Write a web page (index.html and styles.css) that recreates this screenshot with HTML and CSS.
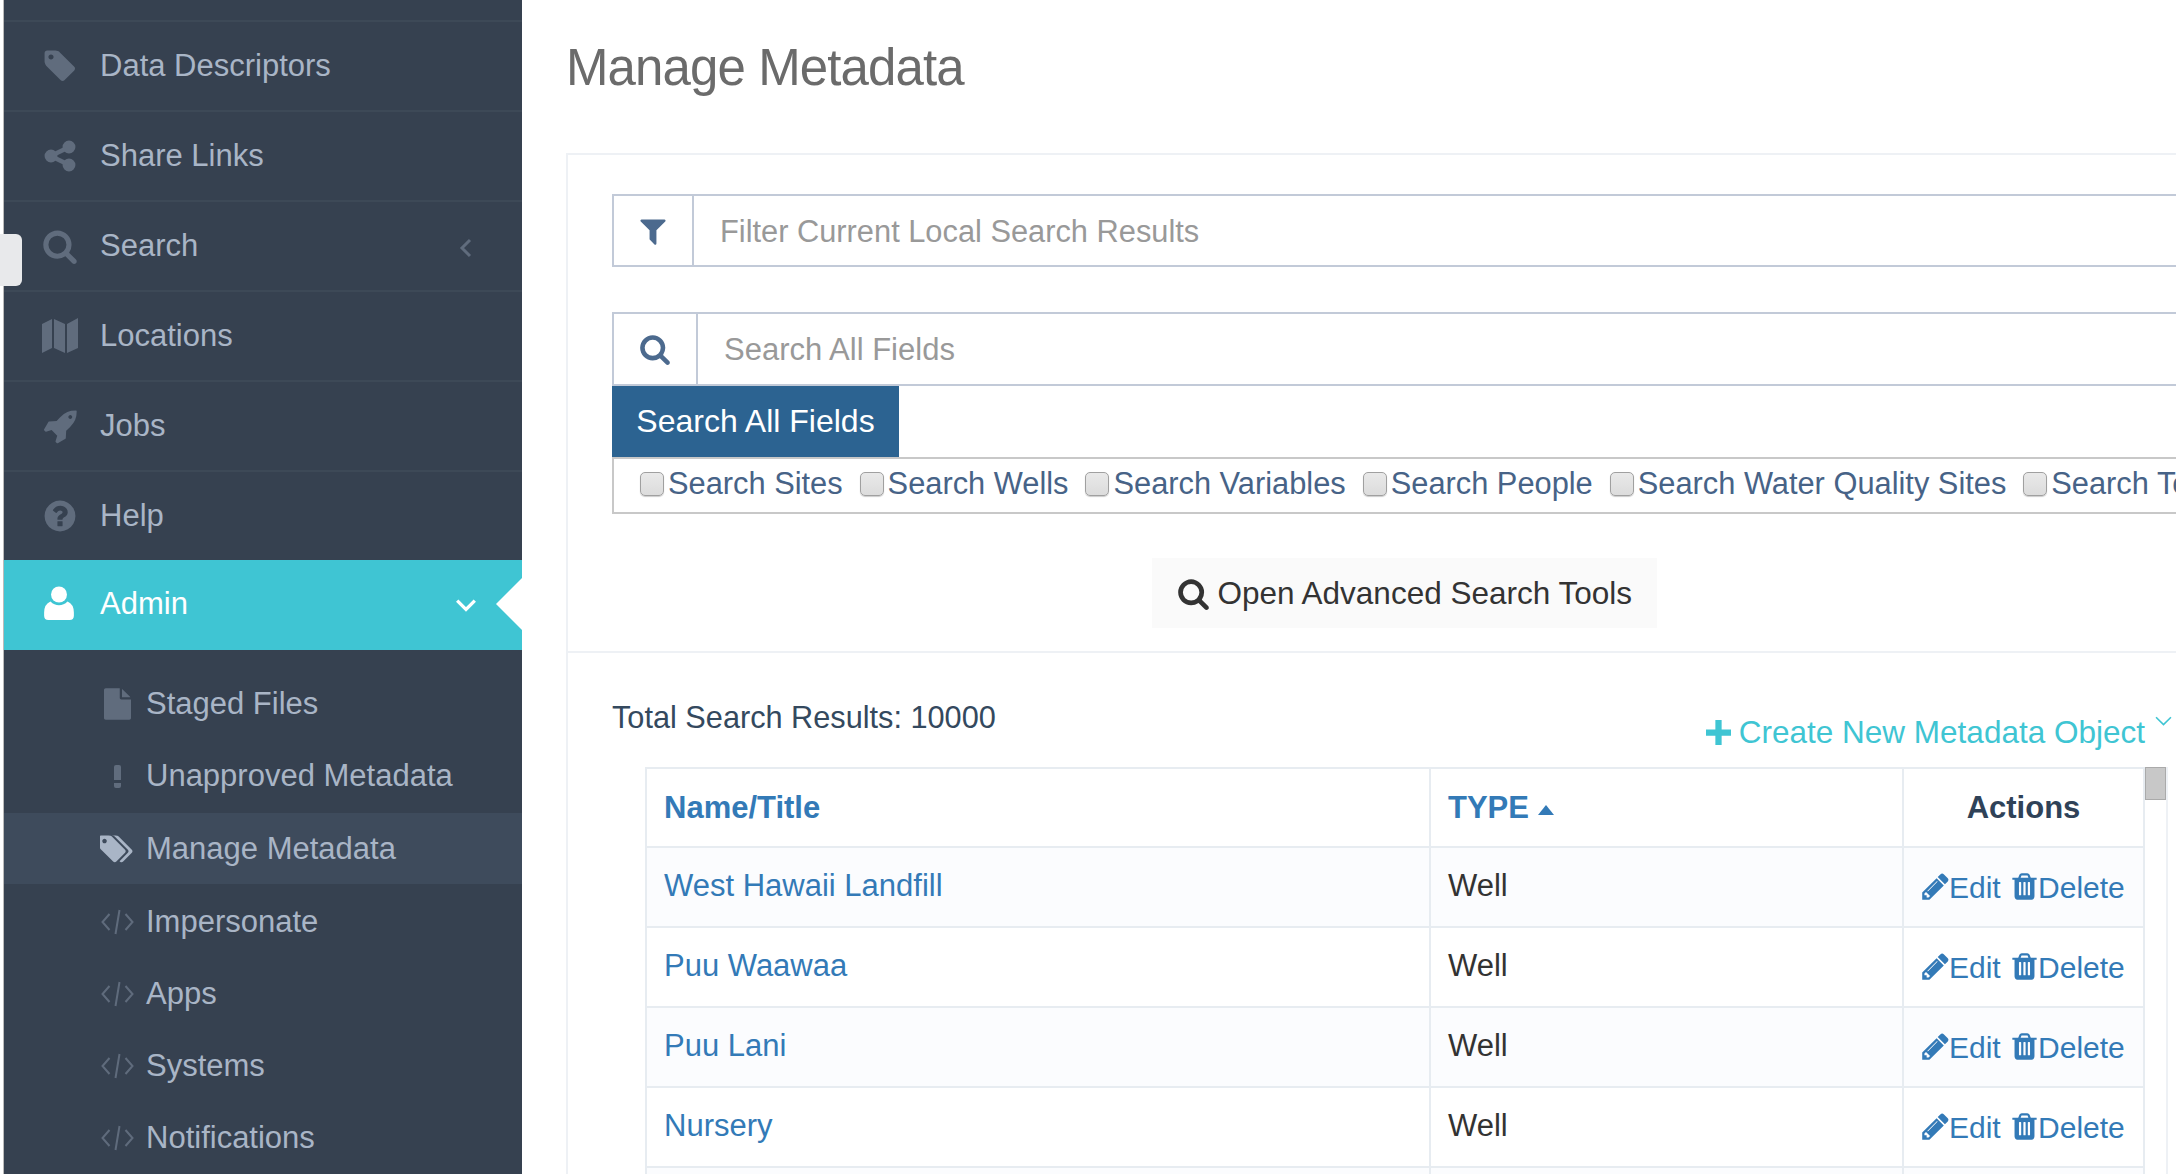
FILE: index.html
```html
<!DOCTYPE html>
<html lang="en">
<head>
    <meta charset="UTF-8">
    <title>Manage Metadata</title>
    <link rel="stylesheet" href="styles.css">
</head>
<body>
    <svg class="icon-defs" xmlns="http://www.w3.org/2000/svg">
        <symbol id="i-tag" viewBox="0 0 1792 1792"><path d="M576 448q0-53-37.5-90.5t-90.5-37.5-90.5 37.5-37.5 90.5 37.5 90.5 90.5 37.5 90.5-37.5 37.5-90.5zm1067 576q0 53-37 90l-491 492q-39 37-91 37-53 0-90-37l-715-716q-38-37-64.5-101t-26.5-117v-416q0-52 38-90t90-38h416q53 0 117 26.5t102 64.5l715 714q37 39 37 91z"/></symbol>
        <symbol id="i-tags" viewBox="0 0 1920 1792"><path d="M384 448q0-53-37.5-90.5t-90.5-37.5-90.5 37.5-37.5 90.5 37.5 90.5 90.5 37.5 90.5-37.5 37.5-90.5zm1067 576q0 53-37 90l-491 492q-39 37-91 37-53 0-90-37l-715-716q-38-37-64.5-101t-26.5-117v-416q0-52 38-90t90-38h416q53 0 117 26.5t102 64.5l715 714q37 39 37 91zm384 0q0 53-37 90l-491 492q-39 37-91 37-36 0-59-14t-53-45l470-470q37-37 37-90 0-52-37-91l-715-714q-38-38-102-64.5t-117-26.5h224q53 0 117 26.5t102 64.5l715 714q37 39 37 91z"/></symbol>
        <symbol id="i-share" viewBox="0 0 1792 1792"><path d="M1344 1024q133 0 226.5 93.5t93.5 226.5-93.5 226.5-226.5 93.5-226.5-93.5-93.5-226.5q0-12 2-34l-360-180q-92 86-218 86-133 0-226.5-93.5t-93.5-226.5 93.5-226.5 226.5-93.5q126 0 218 86l360-180q-2-22-2-34 0-133 93.5-226.5t226.5-93.5 226.5 93.5 93.5 226.5-93.5 226.5-226.5 93.5q-126 0-218-86l-360 180q2 22 2 34t-2 34l360 180q92-86 218-86z"/></symbol>
        <symbol id="i-search" viewBox="0 0 1792 1792"><path d="M1216 832q0-185-131.5-316.5t-316.5-131.5-316.5 131.5-131.5 316.5 131.5 316.5 316.5 131.5 316.5-131.5 131.5-316.5zm512 832q0 52-38 90t-90 38q-54 0-90-38l-343-342q-179 124-399 124-143 0-273.5-55.5t-225-150-150-225-55.5-273.5 55.5-273.5 150-225 225-150 273.5-55.5 273.5 55.5 225 150 150 225 55.5 273.5q0 220-124 399l343 343q37 37 37 90z"/></symbol>
        <symbol id="i-map" viewBox="0 0 36 36"><path d="M0 6l10-5v29L0 35zM12 1l11 5v29l-11-5zM25 6l11-6v30l-11 5z"/></symbol>
        <symbol id="i-rocket" viewBox="0 0 1792 1792"><path d="M1504 448q0-40-28-68t-68-28-68 28-28 68 28 68 68 28 68-28 28-68zm224-288q0 249-75.5 430.5t-253.5 360.5q-81 80-195 176l-20 379q-2 16-16 26l-384 224q-7 4-16 4-12 0-23-9l-64-64q-13-14-8-32l85-276-281-281-276 85q-3 1-9 1-14 0-23-9l-64-64q-17-19-5-39l224-384q10-14 26-16l379-20q96-114 176-195 188-187 358-258t431-71q14 0 24 9.5t10 22.5z"/></symbol>
        <symbol id="i-help" viewBox="0 0 1792 1792"><path d="M1024 1376v-192q0-14-9-23t-23-9h-192q-14 0-23 9t-9 23v192q0 14 9 23t23 9h192q14 0 23-9t9-23zm256-672q0-88-55.5-163t-138.5-116-170-41q-243 0-371 213-15 24 8 42l132 100q7 6 19 6 16 0 25-12 53-68 86-92 34-24 86-24 48 0 85.5 26t37.5 59q0 38-20 61t-68 45q-63 28-115.5 86.5t-52.5 125.5v36q0 14 9 23t23 9h192q14 0 23-9t9-23q0-19 21.5-49.5t54.5-49.5q32-18 49-28.5t46-35 44.5-48 28-60.5 12.5-81zm384 192q0 209-103 385.5t-279.5 279.5-385.5 103-385.5-103-279.5-279.5-103-385.5 103-385.5 279.5-279.5 385.5-103 385.5 103 279.5 279.5 103 385.5z"/></symbol>
        <symbol id="i-user" viewBox="0 0 28 32"><circle cx="14" cy="8" r="7.5"/><path d="M6 14.500q3.500 3.500 8 3.500t8-3.500q6 2.500 6 10.500v3q0 4-4 4H4q-4 0-4-4v-3q0-8 6-10.500z"/></symbol>
        <symbol id="i-file" viewBox="0 0 1536 1792"><path d="M1024 512v-472q22 14 36 28l408 408q14 14 28 36h-472zm-128 32q0 40 28 68t68 28h544v1056q0 40-28 68t-68 28h-1344q-40 0-68-28t-28-68v-1600q0-40 28-68t68-28h800v544z"/></symbol>
        <symbol id="i-pencil" viewBox="0 0 1792 1792"><path d="M491 1536l91-91-235-235-91 91v107h128v128h107zm523-928q0-22-22-22-10 0-17 7l-542 542q-7 7-7 17 0 22 22 22 10 0 17-7l542-542q7-7 7-17zm-54-192l416 416-832 832h-416v-416zm683 96q0 53-37 90l-166 166-416-416 166-165q36-38 90-38 53 0 91 38l235 234q37 39 37 91z"/></symbol>
        <symbol id="i-trash" viewBox="0 0 1792 1792"><path d="M704 1376v-704q0-14-9-23t-23-9h-64q-14 0-23 9t-9 23v704q0 14 9 23t23 9h64q14 0 23-9t9-23zm256 0v-704q0-14-9-23t-23-9h-64q-14 0-23 9t-9 23v704q0 14 9 23t23 9h64q14 0 23-9t9-23zm256 0v-704q0-14-9-23t-23-9h-64q-14 0-23 9t-9 23v704q0 14 9 23t23 9h64q14 0 23-9t9-23zm-544-992h448l-48-117q-7-9-17-11h-317q-10 2-17 11zm928 32v64q0 14-9 23t-23 9h-96v948q0 83-47 143.5t-113 60.5h-832q-66 0-113-58.5t-47-141.5v-952h-96q-14 0-23-9t-9-23v-64q0-14 9-23t23-9h309l70-167q15-37 54-63t79-26h320q40 0 79 26t54 63l70 167h309q14 0 23 9t9 23z"/></symbol>
        <symbol id="i-filter" viewBox="0 0 1792 1792"><path d="M1595 295q17 41-14 70l-493 493v742q0 42-39 59-13 5-25 5-27 0-45-19l-256-256q-19-19-19-45v-486l-493-493q-31-29-14-70 17-39 59-39h1280q42 0 59 39z"/></symbol>
        <symbol id="i-code" viewBox="0 0 32 26"><path d="M8 5L1 13l7 8M24 5l7 8-7 8M18 1l-4 24" fill="none" stroke="currentColor" stroke-width="2"/></symbol>
    </svg>

    <div class="edge-tab"></div>

    <div class="sidebar">
        <a class="nav-item"><svg class="nav-icon"><use href="#i-tag"/></svg>Data Descriptors</a>
        <a class="nav-item"><svg class="nav-icon"><use href="#i-share"/></svg>Share Links</a>
        <a class="nav-item"><svg class="nav-icon"><use href="#i-search"/></svg>Search
            <svg class="nav-arrow" viewBox="0 0 12 20"><path d="M10 2L2 10l8 8"/></svg>
        </a>
        <a class="nav-item"><svg class="nav-icon"><use href="#i-map"/></svg>Locations</a>
        <a class="nav-item"><svg class="nav-icon"><use href="#i-rocket"/></svg>Jobs</a>
        <a class="nav-item"><svg class="nav-icon"><use href="#i-help"/></svg>Help</a>
        <a class="nav-item active"><svg class="nav-icon"><use href="#i-user"/></svg>Admin
            <svg class="nav-arrow" viewBox="0 0 20 12"><path d="M2 2l8 8 8-8"/></svg>
        </a>
        <div class="sub-menu">
            <a class="sub-item"><span class="sub-icon"><svg class="file-icon"><use href="#i-file"/></svg></span>Staged Files</a>
            <a class="sub-item"><span class="sub-icon"><span class="bang"></span></span>Unapproved Metadata</a>
            <a class="sub-item current"><span class="sub-icon"><svg class="tags-icon"><use href="#i-tags"/></svg></span>Manage Metadata</a>
            <a class="sub-item"><span class="sub-icon"><svg class="code-icon"><use href="#i-code"/></svg></span>Impersonate</a>
            <a class="sub-item"><span class="sub-icon"><svg class="code-icon"><use href="#i-code"/></svg></span>Apps</a>
            <a class="sub-item"><span class="sub-icon"><svg class="code-icon"><use href="#i-code"/></svg></span>Systems</a>
            <a class="sub-item"><span class="sub-icon"><svg class="code-icon"><use href="#i-code"/></svg></span>Notifications</a>
        </div>
    </div>

    <div class="content">
        <h1 class="page-title">Manage Metadata</h1>
        <div class="portlet">
            <div class="search-section">
                <div class="input-group first">
                    <span class="addon addon-filter"><svg><use href="#i-filter"/></svg></span>
                    <input type="text" placeholder="Filter Current Local Search Results">
                </div>
                <div class="input-group second">
                    <span class="addon addon-search"><svg><use href="#i-search"/></svg></span>
                    <input type="text" placeholder="Search All Fields">
                </div>
                <button type="button" class="search-btn">Search All Fields</button>
                <div class="check-row">
                    <label><input type="checkbox">Search Sites</label>
                    <label><input type="checkbox">Search Wells</label>
                    <label><input type="checkbox">Search Variables</label>
                    <label><input type="checkbox">Search People</label>
                    <label><input type="checkbox">Search Water Quality Sites</label>
                    <label><input type="checkbox">Search Tools</label>
                </div>
                <div class="advanced">
                    <button type="button" class="advanced-btn"><svg><use href="#i-search"/></svg>Open Advanced Search Tools</button>
                </div>
            </div>
            <div class="results-section">
                <div class="results-head">
                    <div class="total">Total Search Results: 10000</div>
                    <a class="create-link">
                        <svg class="plus" viewBox="0 0 24 24"><path d="M9 0h6v9h9v6h-9v9H9v-9H0V9h9z"/></svg>
                        Create New Metadata Object
                        <svg class="create-arrow" viewBox="0 0 16 10"><path d="M1 1l7 7 7-7"/></svg>
                    </a>
                </div>
                <div class="table-wrap">
                    <table class="meta-table">
                        <colgroup><col class="col-name"><col class="col-type"><col class="col-actions"></colgroup>
                        <thead>
                            <tr>
                                <th>Name/Title</th>
                                <th>TYPE <svg class="sort-up" viewBox="0 0 16 10"><path d="M8 0l8 10H0z"/></svg></th>
                                <th class="actions-head">Actions</th>
                            </tr>
                        </thead>
                        <tbody>
                            <tr>
                                <td><a>West Hawaii Landfill</a></td>
                                <td>Well</td>
                                <td class="actions"><a><svg><use href="#i-pencil"/></svg>Edit</a> <a><svg><use href="#i-trash"/></svg>Delete</a></td>
                            </tr>
                            <tr>
                                <td><a>Puu Waawaa</a></td>
                                <td>Well</td>
                                <td class="actions"><a><svg><use href="#i-pencil"/></svg>Edit</a> <a><svg><use href="#i-trash"/></svg>Delete</a></td>
                            </tr>
                            <tr>
                                <td><a>Puu Lani</a></td>
                                <td>Well</td>
                                <td class="actions"><a><svg><use href="#i-pencil"/></svg>Edit</a> <a><svg><use href="#i-trash"/></svg>Delete</a></td>
                            </tr>
                            <tr>
                                <td><a>Nursery</a></td>
                                <td>Well</td>
                                <td class="actions"><a><svg><use href="#i-pencil"/></svg>Edit</a> <a><svg><use href="#i-trash"/></svg>Delete</a></td>
                            </tr>
                            <tr class="cut-row"><td></td><td></td><td></td></tr>
                        </tbody>
                    </table>
                    <div class="scroll-track"><div class="scroll-thumb"></div></div>
                </div>
            </div>
        </div>
    </div>
</body>
</html>
```

FILE: styles.css
```css
* {
    box-sizing: border-box;
}

html, body {
    height: 100%;
    margin: 0;
    overflow: hidden;
}

body {
    display: flex;
    background: #fff;
    font-family: "Liberation Sans", Arial, sans-serif;
    font-size: 31px;
    color: #34495e;
}

.icon-defs {
    display: none;
}

.edge-tab {
    position: absolute;
    left: 0;
    top: 234px;
    width: 22px;
    height: 52px;
    background: #e8e9eb;
    border-radius: 0 6px 6px 0;
    z-index: 2;
}

/* sidebar */
.sidebar {
    width: 518px;
    flex: none;
    margin-left: 4px;
    padding-top: 20px;
    background: #364150;
    color: #a9b5c6;
    box-shadow: -1px 0 0 #bbb;
}

.nav-item {
    display: flex;
    align-items: center;
    position: relative;
    height: 90px;
    padding-left: 96px;
    border-top: 2px solid #3d4957;
}

.nav-icon {
    position: absolute;
    left: 38px;
    top: 26px;
    width: 36px;
    height: 36px;
    fill: #606c7d;
}

.nav-arrow {
    position: absolute;
    right: 49px;
    top: 36px;
    width: 14px;
    height: 20px;
    fill: none;
    stroke: #606c7d;
    stroke-width: 3;
}

.nav-item.active {
    height: 90px;
    padding-bottom: 2px;
    background: #3fc5d3;
    color: #fff;
    border-top: 0;
}

.nav-item.active .nav-icon {
    left: 40px;
    top: 26px;
    width: 30px;
    height: 34px;
    fill: #fff;
}

.nav-item.active .nav-arrow {
    width: 22px;
    height: 14px;
    top: 38px;
    right: 45px;
    stroke: #fff;
}

.nav-item.active::after {
    content: "";
    position: absolute;
    right: 0;
    top: 18px;
    border-style: solid;
    border-width: 26px 26px 26px 0;
    border-color: transparent #fff transparent transparent;
}

.sub-menu {
    padding-top: 18px;
}

.sub-item {
    display: flex;
    align-items: center;
    height: 72px;
    padding-left: 96px;
}

.sub-item.current {
    height: 71px;
    margin: 1px 0 2px;
    background: #3e4b5c;
}

.sub-icon {
    display: flex;
    justify-content: center;
    align-items: center;
    width: 34px;
    margin-right: 12px;
    color: #5f6b7c;
}

.file-icon {
    width: 27px;
    height: 32px;
    fill: #606c7d;
}

.tags-icon {
    width: 34px;
    height: 32px;
    fill: #a9b5c6;
}

.code-icon {
    width: 33px;
    height: 26px;
}

.bang {
    display: block;
    width: 7px;
    height: 23px;
    border-radius: 2px;
    background: linear-gradient(#606c7d 15px, transparent 15px, transparent 18px, #606c7d 18px);
}

/* main column */
.content {
    flex: 1;
    min-width: 0;
    padding-left: 44px;
}

.page-title {
    height: 153px;
    margin: 0;
    padding-top: 38px;
    font-size: 51px;
    line-height: 60px;
    font-weight: normal;
    letter-spacing: -0.9px;
    color: #6b6b6b;
}

.portlet {
    width: 1676px;
    border: 2px solid #eef1f5;
}

.search-section {
    padding: 39px 44px 23px;
    border-bottom: 2px solid #eef1f5;
}

.input-group {
    display: flex;
    height: 73px;
    border: 2px solid #c2cad8;
}

.input-group.second {
    height: 74px;
    margin-top: 45px;
}

.addon {
    display: flex;
    justify-content: center;
    align-items: center;
    flex: none;
    border-right: 2px solid #c2cad8;
    fill: #4c6a8e;
}

.addon-filter {
    width: 80px;
}

.addon-search {
    width: 84px;
}

.addon svg {
    width: 32px;
    height: 32px;
}

.input-group input {
    flex: 1;
    min-width: 0;
    padding: 2px 26px 0;
    border: 0;
    outline: 0;
    font: inherit;
    color: #333;
}

.input-group.first input {
    font-size: 30.8px;
}

.input-group input::placeholder {
    color: #999;
}

.search-btn {
    display: block;
    width: 287px;
    height: 71px;
    padding: 0;
    border: 0;
    background: #2c6391;
    color: #fff;
    font: inherit;
    font-size: 32px;
}

.check-row {
    display: flex;
    align-items: center;
    gap: 17px;
    height: 57px;
    padding: 0 0 3px 26px;
    border: 2px solid #c8c8c8;
    font-size: 30.8px;
    color: #476387;
    white-space: nowrap;
    overflow: hidden;
}

.check-row label {
    display: flex;
    align-items: center;
}

.check-row input {
    appearance: none;
    width: 24px;
    height: 24px;
    margin: 0 4px 0 0;
    border: 1px solid #a0a0a0;
    border-radius: 5px;
    background: linear-gradient(#e9e9e9, #dcdcdc);
    box-shadow: 0 1px 1px #ccc;
}

.advanced {
    margin-top: 44px;
    text-align: center;
}

.advanced-btn {
    display: inline-flex;
    align-items: center;
    width: 505px;
    height: 70px;
    padding: 0 0 0 25px;
    border: 0;
    background: #fafafa;
    color: #333;
    font: inherit;
    font-size: 31.5px;
    fill: #333;
}

.advanced-btn svg {
    width: 33px;
    height: 33px;
    margin-right: 8px;
}

.results-section {
    padding: 0 44px;
}

.results-head {
    display: flex;
    justify-content: space-between;
    align-items: flex-start;
    width: 1560px;
    height: 114px;
}

.total {
    margin-top: 47px;
    font-size: 30.7px;
    line-height: 36px;
}

.create-link {
    display: flex;
    align-items: center;
    margin-top: 61px;
    font-size: 31.5px;
    line-height: 36px;
    color: #3fc5d3;
}

.plus {
    width: 25px;
    height: 25px;
    margin-right: 8px;
    fill: #3fc5d3;
}

.create-arrow {
    align-self: flex-start;
    width: 17px;
    height: 11px;
    margin: 2px 0 0 10px;
    fill: none;
    stroke: #3fc5d3;
    stroke-width: 1.5;
}

.table-wrap {
    display: flex;
    width: 1519px;
    margin-left: 33px;
}

.meta-table {
    width: 1498px;
    flex: none;
    table-layout: fixed;
    border-collapse: collapse;
    border: 2px solid #e7ecf1;
}

.col-name {
    width: 784px;
}

.col-type {
    width: 473px;
}

.col-actions {
    width: 241px;
}

.meta-table th, .meta-table td {
    height: 80px;
    padding: 0 17px 2px;
    border: 2px solid #e7ecf1;
    text-align: left;
    white-space: nowrap;
}

.meta-table th {
    height: 79px;
    padding-bottom: 0;
    color: #337ab7;
    font-weight: bold;
}

.meta-table th.actions-head {
    padding: 0;
    text-align: center;
    color: #2f4258;
}

.meta-table td {
    color: #333;
}

.meta-table td a {
    color: #337ab7;
}

.meta-table tbody tr:nth-child(odd) {
    background: #fbfcfe;
}

.meta-table td.actions {
    padding: 1px 0 0 16px;
    font-size: 30px;
    fill: #337ab7;
}

.actions svg {
    width: 31px;
    height: 31px;
    margin-right: -2px;
    vertical-align: -4px;
}

.sort-up {
    width: 16px;
    height: 10px;
    fill: #337ab7;
    vertical-align: 3px;
}

.scroll-track {
    flex: none;
    width: 23px;
    border-right: 2px solid #eef1f5;
}

.scroll-thumb {
    height: 33px;
    background: #c8c8c8;
    border: 1px solid #aaa;
}
```
